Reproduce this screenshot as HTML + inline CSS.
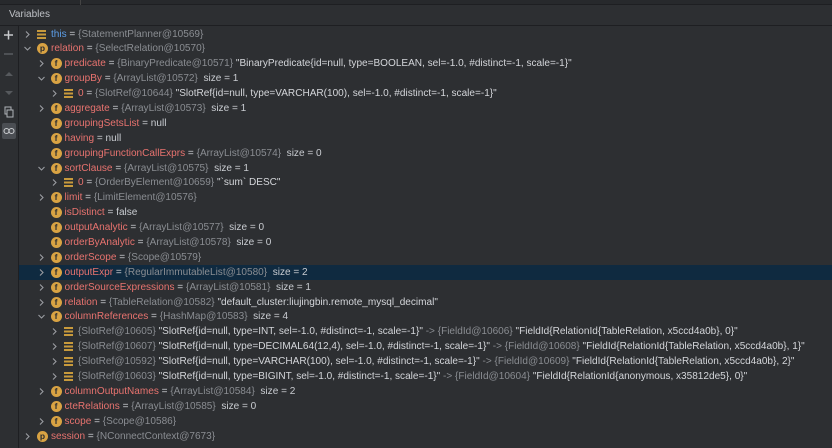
<!DOCTYPE html>
<html><head><meta charset="utf-8"><style>
*{margin:0;padding:0;box-sizing:border-box}
body{width:832px;height:448px;background:#2d2f32;overflow:hidden;font-family:"Liberation Sans",sans-serif;font-size:10.05px;color:#c9ccd1;position:relative}
.top{position:absolute;left:0;top:0;width:832px;height:5px;background:#27292c;border-bottom:1px solid #1e1f22}
.top i{position:absolute;left:80px;top:0;width:1px;height:5px;background:#444}
.hdr{position:absolute;left:9px;top:9px;font-size:10px;color:#bfc2c7}
.hl{position:absolute;left:0;top:25px;width:832px;height:1px;background:#1e1f22}
.tb{position:absolute;left:18px;top:26px;width:1px;height:422px;background:#1e1f22}
.row{position:absolute;left:19px;width:813px;height:15px;line-height:15px;white-space:nowrap}
.sel{background:#0f2a40}
.ar{position:absolute;top:4px;width:7px;height:7px}
.ic{position:absolute;top:2px;width:11px;height:11px;border-radius:50%;background:#d9a343;color:#2b2d30;font-size:8.5px;line-height:11px;text-align:center;font-weight:bold}
.lst{position:absolute;top:3px;width:9px;height:9px;background:repeating-linear-gradient(#c89a3c 0 2px,transparent 2px 3.5px)}
.t{position:absolute;top:0}
.n{color:#e8736f}
.b{color:#5c9ee8}
.g{color:#8a8d92}
.w{color:#d4d6da}
</style></head><body>
<div class="top"><i></i></div>
<div class="hdr">Variables</div>
<div class="hl"></div>
<div class="tb"></div>
<svg style="position:absolute;left:0;top:26px" width="18" height="120">
<path d="M4 9h9M8.5 4.5v9" stroke="#c8cacd" stroke-width="1.5"/>
<path d="M4 28h9" stroke="#5a5d61" stroke-width="1.5"/>
<path d="M5 50l4-4 4 4z" fill="#56595d"/>
<path d="M5 65l4 4 4-4z" fill="#56595d"/>
<rect x="5" y="81" width="6" height="7" fill="none" stroke="#b0b3b8"/><rect x="7" y="84" width="6" height="7" fill="#2d2f32" stroke="#b0b3b8"/>
<rect x="2" y="97" width="14" height="16" rx="2" fill="#4b4e53"/>
<circle cx="6.5" cy="105" r="2.5" fill="none" stroke="#c8cacd" stroke-width="1.1"/><circle cx="11.5" cy="105" r="2.5" fill="none" stroke="#c8cacd" stroke-width="1.1"/>
</svg>
<div id="rows"></div>
<script>
const R=[
[0,1,'l','<span class="b">this</span> = <span class="g">{StatementPlanner@10569}</span>'],
[0,2,'p','<span class="n">relation</span> = <span class="g">{SelectRelation@10570}</span>'],
[1,1,'f','<span class="n">predicate</span> = <span class="g">{BinaryPredicate@10571}</span> <span class="w">"BinaryPredicate{id=null, type=BOOLEAN, sel=-1.0, #distinct=-1, scale=-1}"</span>'],
[1,2,'f','<span class="n">groupBy</span> = <span class="g">{ArrayList@10572}</span> &nbsp;size = 1'],
[2,1,'l','<span class="n">0</span> = <span class="g">{SlotRef@10644}</span> <span class="w">"SlotRef{id=null, type=VARCHAR(100), sel=-1.0, #distinct=-1, scale=-1}"</span>'],
[1,1,'f','<span class="n">aggregate</span> = <span class="g">{ArrayList@10573}</span> &nbsp;size = 1'],
[1,0,'f','<span class="n">groupingSetsList</span> = null'],
[1,0,'f','<span class="n">having</span> = null'],
[1,0,'f','<span class="n">groupingFunctionCallExprs</span> = <span class="g">{ArrayList@10574}</span> &nbsp;size = 0'],
[1,2,'f','<span class="n">sortClause</span> = <span class="g">{ArrayList@10575}</span> &nbsp;size = 1'],
[2,1,'l','<span class="n">0</span> = <span class="g">{OrderByElement@10659}</span> <span class="w">"`sum` DESC"</span>'],
[1,1,'f','<span class="n">limit</span> = <span class="g">{LimitElement@10576}</span>'],
[1,0,'f','<span class="n">isDistinct</span> = false'],
[1,0,'f','<span class="n">outputAnalytic</span> = <span class="g">{ArrayList@10577}</span> &nbsp;size = 0'],
[1,0,'f','<span class="n">orderByAnalytic</span> = <span class="g">{ArrayList@10578}</span> &nbsp;size = 0'],
[1,1,'f','<span class="n">orderScope</span> = <span class="g">{Scope@10579}</span>'],
[1,1,'f','<span class="n">outputExpr</span> = <span class="g">{RegularImmutableList@10580}</span> &nbsp;size = 2',1],
[1,1,'f','<span class="n">orderSourceExpressions</span> = <span class="g">{ArrayList@10581}</span> &nbsp;size = 1'],
[1,1,'f','<span class="n">relation</span> = <span class="g">{TableRelation@10582}</span> <span class="w">"default_cluster:liujingbin.remote_mysql_decimal"</span>'],
[1,2,'f','<span class="n">columnReferences</span> = <span class="g">{HashMap@10583}</span> &nbsp;size = 4'],
[2,1,'l','<span class="g">{SlotRef@10605}</span> <span class="w">"SlotRef{id=null, type=INT, sel=-1.0, #distinct=-1, scale=-1}"</span> <span class="g">-&gt; {FieldId@10606}</span> <span class="w">"FieldId{RelationId{TableRelation, x5ccd4a0b}, 0}"</span>'],
[2,1,'l','<span class="g">{SlotRef@10607}</span> <span class="w">"SlotRef{id=null, type=DECIMAL64(12,4), sel=-1.0, #distinct=-1, scale=-1}"</span> <span class="g">-&gt; {FieldId@10608}</span> <span class="w">"FieldId{RelationId{TableRelation, x5ccd4a0b}, 1}"</span>'],
[2,1,'l','<span class="g">{SlotRef@10592}</span> <span class="w">"SlotRef{id=null, type=VARCHAR(100), sel=-1.0, #distinct=-1, scale=-1}"</span> <span class="g">-&gt; {FieldId@10609}</span> <span class="w">"FieldId{RelationId{TableRelation, x5ccd4a0b}, 2}"</span>'],
[2,1,'l','<span class="g">{SlotRef@10603}</span> <span class="w">"SlotRef{id=null, type=BIGINT, sel=-1.0, #distinct=-1, scale=-1}"</span> <span class="g">-&gt; {FieldId@10604}</span> <span class="w">"FieldId{RelationId{anonymous, x35812de5}, 0}"</span>'],
[1,1,'f','<span class="n">columnOutputNames</span> = <span class="g">{ArrayList@10584}</span> &nbsp;size = 2'],
[1,0,'f','<span class="n">cteRelations</span> = <span class="g">{ArrayList@10585}</span> &nbsp;size = 0'],
[1,1,'f','<span class="n">scope</span> = <span class="g">{Scope@10586}</span>'],
[0,1,'p','<span class="n">session</span> = <span class="g">{NConnectContext@7673}</span>']
];
let h='';
R.forEach((r,i)=>{
 const top=26.5+i*14.89, d=r[0]*13.5, ax=5+d, ix=18+d, tx=32+d;
 let a='';
 if(r[1]==1)a=`<svg class="ar" style="left:${ax}px" viewBox="0 0 7 7"><path d="M2 0.5l3 3-3 3" fill="none" stroke="#9a9da2" stroke-width="1.1"/></svg>`;
 if(r[1]==2)a=`<svg class="ar" style="left:${ax}px" viewBox="0 0 7 7"><path d="M0.5 2l3 3 3-3" fill="none" stroke="#9a9da2" stroke-width="1.1"/></svg>`;
 let ic=r[2]=='l'?`<div class="lst" style="left:${ix}px"></div>`:`<div class="ic" style="left:${ix}px">${r[2]}</div>`;
 h+=`<div class="row${r[4]?' sel':''}" style="top:${top}px">${a}${ic}<div class="t" style="left:${tx}px">${r[3]}</div></div>`;
});
document.getElementById('rows').innerHTML=h;
</script>
</body></html>
